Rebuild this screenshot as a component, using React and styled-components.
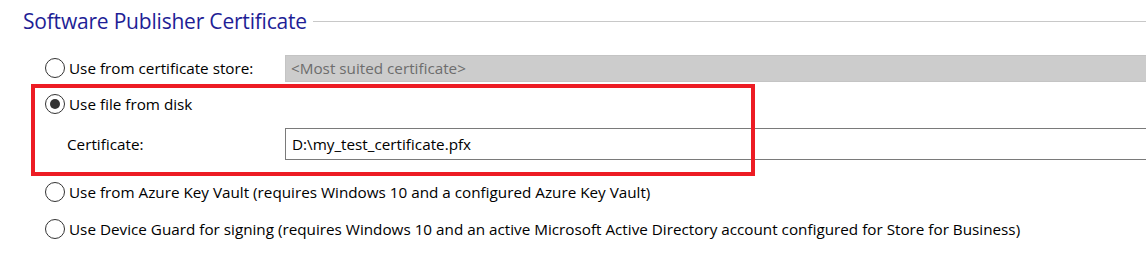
import * as React from "react";
import styled, { createGlobalStyle } from "styled-components";

const GlobalStyle = createGlobalStyle`
  html, body {
    margin: 0;
    padding: 0;
    background: #ffffff;
  }
  body {
    font-family: "Open Sans", "Noto Sans", sans-serif;
    color: #000000;
  }
`;

// styles
const Page = styled.div`
  position: relative;
  width: 1146px;
  height: 267px;
  overflow: hidden;
  background: #ffffff;
`;
const Header = styled.div`
  display: flex;
  align-items: center;
  height: 42px;
  padding-left: 23px;
`;
const HeaderTitle = styled.h2`
  margin: 0;
  font-size: 21px;
  font-weight: 400;
  color: #1e1e96;
  letter-spacing: -0.2px;
  white-space: nowrap;
`;
const HeaderLine = styled.div`
  flex: 1;
  height: 1px;
  margin-left: 6px;
  margin-top: 1px;
  background: #c8c8c8;
`;
const Options = styled.div`
  display: flex;
  flex-direction: column;
  padding-left: 45px;
`;
const Row = styled.div`
  display: grid;
  grid-template-columns: 240px 1fr;
  align-items: center;
  height: ${(p) => p.$h || 36}px;
`;
const RadioLabel = styled.label`
  display: flex;
  align-items: center;
  gap: 4px;
  font-size: 15.25px;
  white-space: nowrap;
  grid-column: ${(p) => (p.$wide ? "1 / 3" : "1")};
`;
const Radio = styled.span`
  position: relative;
  flex: none;
  width: 18px;
  height: 18px;
  border: 1px solid #333333;
  border-radius: 50%;
  background: #ffffff;

  &::after {
    content: "";
    display: ${(p) => (p.$checked ? "block" : "none")};
    position: absolute;
    left: 4px;
    top: 4px;
    width: 10px;
    height: 10px;
    border-radius: 50%;
    background: #333333;
  }
`;
const FieldLabel = styled.span`
  font-size: 15.25px;
  padding-left: 22px;
`;
const Field = styled.div`
  display: flex;
  align-items: center;
  height: ${(p) => (p.$disabled ? 27 : 32)}px;
  box-sizing: border-box;
  padding-left: ${(p) => (p.$disabled ? 5 : 6)}px;
  font-size: 15.25px;
  color: ${(p) => (p.$disabled ? "#6d6d6d" : "#000000")};
  background: ${(p) => (p.$disabled ? "#cccccc" : "#ffffff")};
  border: 1px solid ${(p) => (p.$disabled ? "#c4c4c4" : "#7a7a7a")};
  border-right: none;
`;
const Highlight = styled.div`
  position: absolute;
  left: 31px;
  top: 84px;
  width: 724px;
  height: 92px;
  box-sizing: border-box;
  border: 4px solid #ed1c24;
  pointer-events: none;
`;

// markup
const App = () => {
  return (
    <Page>
      <GlobalStyle />
      <Header>
        <HeaderTitle>Software Publisher Certificate</HeaderTitle>
        <HeaderLine />
      </Header>
      <Options>
        <Row $h={52}>
          <RadioLabel>
            <Radio />
            Use from certificate store:
          </RadioLabel>
          <Field $disabled>&lt;Most suited certificate&gt;</Field>
        </Row>
        <Row $h={20}>
          <RadioLabel>
            <Radio $checked />
            Use file from disk
          </RadioLabel>
        </Row>
        <Row $h={60}>
          <FieldLabel>Certificate:</FieldLabel>
          <Field>D:\my_test_certificate.pfx</Field>
        </Row>
        <Row $h={36}>
          <RadioLabel $wide>
            <Radio />
            Use from Azure Key Vault (requires Windows 10 and a configured Azure Key Vault)
          </RadioLabel>
        </Row>
        <Row $h={37}>
          <RadioLabel $wide>
            <Radio />
            Use Device Guard for signing (requires Windows 10 and an active Microsoft Active Directory account configured for Store for Business)
          </RadioLabel>
        </Row>
      </Options>
      <Highlight />
    </Page>
  );
};

export default App;
